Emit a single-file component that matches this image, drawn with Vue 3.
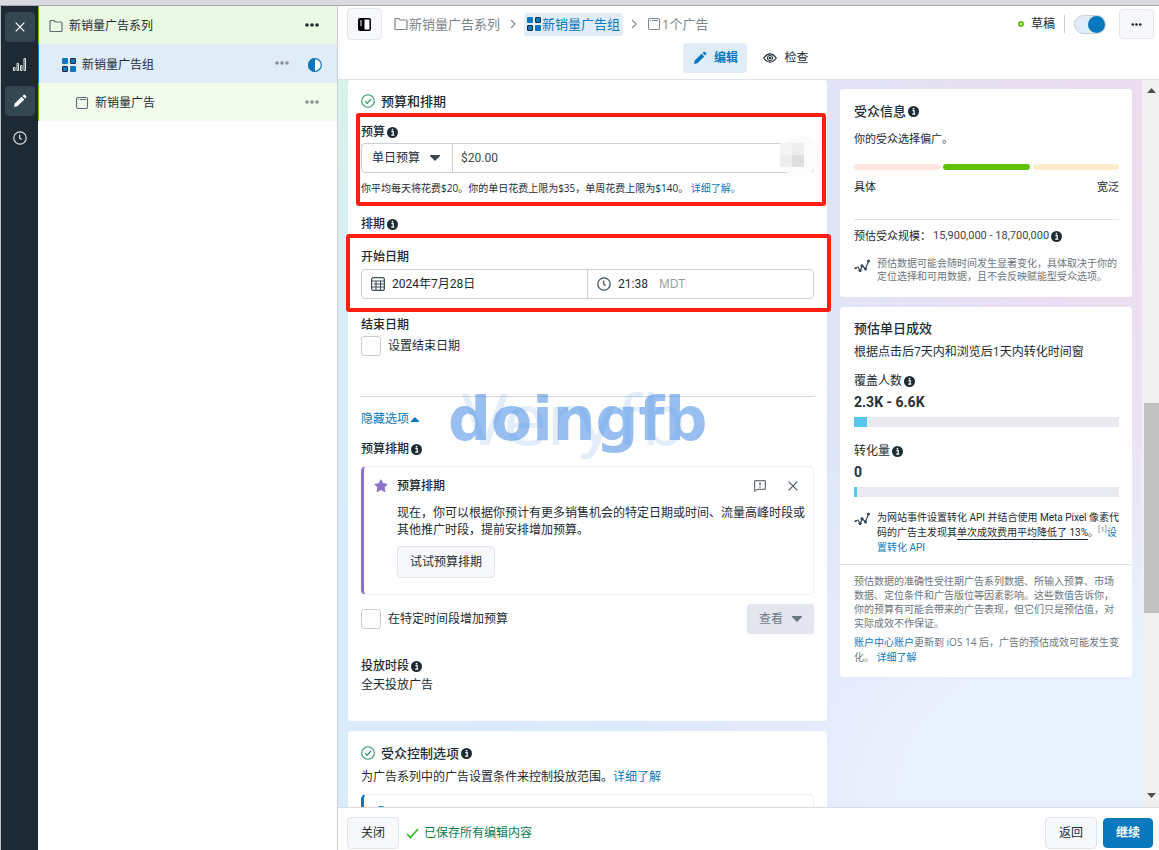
<script setup>
import { ref } from 'vue'

const budgetType = ref('daily')
const budget = ref('$20.00')
const startDate = ref('2024年7月28日')
const startTime = ref('21:38')
const hasEnd = ref(false)
const boost = ref(false)
const enabled = ref(true)
const reach = 5
const conversions = 1
</script>

<template>
  <div class="app">
    <svg class="defs" aria-hidden="true">
      <symbol id="i-info" viewBox="0 0 10 10"><circle cx="5" cy="5" r="5" fill="currentColor" /><path d="M4 4.2h1.6v3M3.8 7.4h2.8" stroke="#fff" stroke-width="1.1" fill="none" /><circle cx="5" cy="2.4" r=".8" fill="#fff" /></symbol>
      <symbol id="i-folder" viewBox="0 0 14 14"><path d="M1 11.5v-9q0-1 1-1h2.6q.6 0 .9.6l.5.9h6q1 0 1 1v7.500q0 1-1 1H2q-1 0-1-1z" fill="none" stroke="currentColor" stroke-width="1.2" /></symbol>
      <symbol id="i-grid" viewBox="0 0 14 14"><rect width="6" height="6" rx="1" fill="#0a78be" /><rect x="8.500" y=".5" width="5" height="5" rx=".5" fill="#0a78be" stroke="#1c2b33" /><rect x=".5" y="8.500" width="5" height="5" rx=".5" fill="#0a78be" stroke="#1c2b33" /><rect x="8" y="8" width="6" height="6" rx="1" fill="#0a78be" /></symbol>
      <symbol id="i-ad" viewBox="0 0 14 14"><rect x="1.500" y="1.500" width="11" height="11" rx="1.500" fill="none" stroke="currentColor" stroke-width="1.1" /><path d="M3 3.500h1M5 3.500h6" stroke="currentColor" stroke-width="1" /></symbol>
      <symbol id="i-dots" viewBox="0 0 14 4"><circle cx="2" cy="2" r="1.800" fill="currentColor" /><circle cx="7" cy="2" r="1.800" fill="currentColor" /><circle cx="12" cy="2" r="1.800" fill="currentColor" /></symbol>
      <symbol id="i-pencil" viewBox="0 0 14 14"><path d="M1 13l.7-3.400L8.600 2.700l2.700 2.700-6.900 6.900zM9.500 1.900l1-1q.7-.6 1.400 0l1.200 1.200q.6.7 0 1.400l-1 1z" fill="currentColor" /></symbol>
      <symbol id="i-clock" viewBox="0 0 14 14"><circle cx="7" cy="7" r="6.200" fill="none" stroke="currentColor" stroke-width="1.200" /><path d="M6.700 3.600v3.700l2 1.300" fill="none" stroke="currentColor" stroke-width="1.200" /></symbol>
      <symbol id="i-x" viewBox="0 0 10 10"><path d="M.7.7l8.600 8.600M9.300.7L.7 9.300" stroke="currentColor" stroke-width="1.200" /></symbol>
      <symbol id="i-check" viewBox="0 0 14 14"><circle cx="7" cy="7" r="6.300" fill="none" stroke="#2c9a6c" stroke-width="1.100" /><path d="M4 7.300l2.100 2L10 5" fill="none" stroke="#2c9a6c" stroke-width="1.200" /></symbol>
      <symbol id="i-trend" viewBox="0 0 16 14"><path d="M1 9.500l3-1.500 2.500 4L8 6.500l3.500 3.500L14.500 2" fill="none" stroke="currentColor" stroke-width="1.200" /><circle cx="1.500" cy="9.300" r="1" fill="currentColor" /><circle cx="6" cy="11.500" r="1.500" fill="currentColor" /><circle cx="8" cy="6.800" r="1.600" fill="currentColor" /><circle cx="11.500" cy="10" r="1.500" fill="currentColor" /><circle cx="14.500" cy="2" r="1.500" fill="currentColor" /></symbol>
      <symbol id="i-caret" viewBox="0 0 10 6"><path d="M0 0h10v1L5 6 0 1z" fill="currentColor" /></symbol>
    </svg>

    <div class="strip"></div>
    <div class="body">
      <nav class="rail" aria-label="工具">
        <button class="on" aria-label="关闭编辑器"><svg width="10" height="10"><use href="#i-x" /></svg></button>
        <button aria-label="图表"><svg width="13" height="13" viewBox="0 0 13 13" fill="none" stroke="currentColor"><path d="M.5 9.500h1.500v3H.5zM4 5.500h1.500v7H4zM7.500 7.500H9v5H7.500zM11 .5h1.500v12H11z" /></svg></button>
        <button class="on" aria-label="编辑模式"><svg width="14" height="14"><use href="#i-pencil" /></svg></button>
        <button aria-label="历史记录"><svg width="14" height="14"><use href="#i-clock" /></svg></button>
      </nav>

      <aside class="tree">
        <div class="node n1"><svg width="14" height="14"><use href="#i-folder" /></svg><span>新销量广告系列</span><button aria-label="更多"><svg width="14" height="4"><use href="#i-dots" /></svg></button></div>
        <div class="node n2"><svg width="14" height="14"><use href="#i-grid" /></svg><span>新销量广告组</span><button aria-label="更多"><svg width="14" height="4"><use href="#i-dots" /></svg></button><svg class="half" width="14" height="14" viewBox="0 0 14 14"><circle cx="7" cy="7" r="6.300" fill="#fff" stroke="#0a78be" stroke-width="1.200" /><path d="M7 0a7 7 0 0 0 0 14z" fill="#0a78be" /></svg></div>
        <div class="node n3"><svg width="14" height="14"><use href="#i-ad" /></svg><span>新销量广告</span><button aria-label="更多"><svg width="14" height="4"><use href="#i-dots" /></svg></button></div>
      </aside>

      <div class="main">
        <header>
          <div class="bar">
            <button class="sq" aria-label="切换侧栏"><svg width="13" height="13" viewBox="0 0 13 13"><rect x=".8" y=".8" width="11.400" height="11.400" rx="1" fill="#fff" stroke="#000" stroke-width="1.500" /><path d="M1 1h5.500v11H1z" /><path d="M2 3h2M2 5h2M2 7h2" stroke="#fff" /></svg></button>
            <nav class="crumbs" aria-label="路径">
              <a href="#"><svg width="14" height="14"><use href="#i-folder" /></svg>新销量广告系列</a>
              <svg width="6" height="10" viewBox="0 0 6 10"><path d="M1 1l4 4-4 4" fill="none" stroke="#8a8f95" stroke-width="1.300" /></svg>
              <a href="#" class="cur"><svg width="14" height="14"><use href="#i-grid" /></svg>新销量广告组</a>
              <svg width="6" height="10" viewBox="0 0 6 10"><path d="M1 1l4 4-4 4" fill="none" stroke="#8a8f95" stroke-width="1.300" /></svg>
              <a href="#"><svg width="14" height="14"><use href="#i-ad" /></svg>1个广告</a>
            </nav>
            <div class="state">
              <i class="ring"></i><span>草稿</span>
              <label class="switch"><input v-model="enabled" type="checkbox" aria-label="启用" /></label>
              <button class="sq more" aria-label="更多选项"><svg width="11" height="3"><use href="#i-dots" /></svg></button>
            </div>
          </div>
          <div class="tabs">
            <button class="tab active"><svg width="14" height="14"><use href="#i-pencil" /></svg>编辑</button>
            <button class="tab"><svg width="14" height="10" viewBox="0 0 14 10"><path d="M.7 5Q7-3.200 13.300 5 7 13.200.7 5z" fill="none" stroke="currentColor" stroke-width="1.200" /><circle cx="7" cy="5" r="2.600" fill="none" stroke="currentColor" /><circle cx="7" cy="5" r="1.300" fill="currentColor" /></svg>检查</button>
          </div>
        </header>

        <div class="scroll">
          <div class="columns">
            <div class="left">
              <section class="card form">
                <h2><svg width="14" height="14"><use href="#i-check" /></svg>预算和排期</h2>

                <div class="budget marked">
                  <label class="lbl" for="amount">预算<svg class="info"><use href="#i-info" /></svg></label>
                  <div class="field">
                    <div class="pick">
                      <select v-model="budgetType" aria-label="预算类型"><option value="daily">单日预算</option></select>
                      <svg width="10" height="6"><use href="#i-caret" /></svg>
                    </div>
                    <input id="amount" v-model="budget" type="text" class="amount" />
                  </div>
                  <div class="blob"><i></i><i></i><i></i><i></i></div>
                  <p class="hint">你平均每天将花费$20。你的单日花费上限为$35，单周花费上限为$140。 <a href="#">详细了解。</a></p>
                </div>

                <h3 class="lbl sched">排期<svg class="info"><use href="#i-info" /></svg></h3>

                <div class="start marked">
                  <label class="lbl" for="date">开始日期</label>
                  <div class="field dates">
                    <div class="half-field">
                      <svg width="14" height="14" viewBox="0 0 14 14" fill="none" stroke="currentColor"><rect x=".6" y=".6" width="12.800" height="12.800" rx="2" stroke-width="1.200" /><path d="M.5 4h13M2.500 7h11M.5 10h13M5 4v9M9.500 4v9" /></svg>
                      <input id="date" v-model="startDate" type="text" />
                    </div>
                    <div class="half-field">
                      <svg width="14" height="14"><use href="#i-clock" /></svg>
                      <input v-model="startTime" type="text" class="time" aria-label="开始时间" /><span class="tz">MDT</span>
                    </div>
                  </div>
                </div>

                <h3 class="lbl end">结束日期</h3>
                <label class="check"><input v-model="hasEnd" type="checkbox" />设置结束日期</label>

                <div class="watermark" aria-hidden="true"><span class="back">Veryfb</span><span class="front">doingfb</span></div>
                <hr />
                <a href="#" class="toggle">隐藏选项<svg width="8" height="5" viewBox="0 0 8 5"><path d="M0 5V4l4-4 4 4v1z" fill="currentColor" /></svg></a>
                <h3 class="lbl plan">预算排期<svg class="info"><use href="#i-info" /></svg></h3>

                <div class="notice">
                  <div class="nhead">
                    <svg width="14" height="14" viewBox="0 0 14 14"><path d="M7 .8l1.900 3.900 4.300.6-3.100 3 .8 4.300L7 10.600l-3.900 2 .8-4.300-3.100-3 4.300-.6z" fill="#8c72cb" stroke="#8c72cb" stroke-linejoin="round" /></svg>
                    <strong>预算排期</strong>
                    <button aria-label="反馈"><svg width="12" height="12" viewBox="0 0 12 12" fill="none" stroke="currentColor"><path d="M.7.7h10.600v8.600H3L.7 11.500z" /><path d="M6 2.300v3M6 6.500v1.200" stroke-width="1.300" /></svg></button>
                    <button aria-label="关闭提示"><svg width="10" height="10"><use href="#i-x" /></svg></button>
                  </div>
                  <p>现在，你可以根据你预计有更多销售机会的特定日期或时间、流量高峰时段或其他推广时段，提前安排增加预算。</p>
                  <button class="btn">试试预算排期</button>
                </div>

                <div class="boost">
                  <label class="check"><input v-model="boost" type="checkbox" />在特定时间段增加预算</label>
                  <button class="view" disabled>查看<svg width="10" height="6"><use href="#i-caret" /></svg></button>
                </div>

                <h3 class="lbl hours">投放时段<svg class="info"><use href="#i-info" /></svg></h3>
                <p class="allday">全天投放广告</p>
              </section>

              <section class="card control">
                <h2><svg width="14" height="14"><use href="#i-check" /></svg>受众控制选项<svg class="info"><use href="#i-info" /></svg></h2>
                <p>为广告系列中的广告设置条件来控制投放范围。<a href="#">详细了解</a></p>
                <div class="notice blue"><i></i></div>
              </section>
            </div>

            <aside class="right">
              <section class="card audience">
                <h2>受众信息<svg class="info"><use href="#i-info" /></svg></h2>
                <p class="lead">你的受众选择偏广。</p>
                <div class="meter"><i class="a"></i><i class="b"></i><i class="c"></i></div>
                <div class="ends"><span>具体</span><span>宽泛</span></div>
                <p class="size">预估受众规模：<span>15,900,000 - 18,700,000</span><svg class="info"><use href="#i-info" /></svg></p>
                <div class="tip"><svg width="16" height="14"><use href="#i-trend" /></svg><p>预估数据可能会随时间发生显著变化，具体取决于你的定位选择和可用数据，且不会反映赋能型受众选项。</p></div>
              </section>

              <section class="card results">
                <div class="pad">
                  <h2>预估单日成效</h2>
                  <p class="window">根据点击后7天内和浏览后1天内转化时间窗</p>
                  <div class="stat">覆盖人数<svg class="info"><use href="#i-info" /></svg></div>
                  <div class="num">2.3K - 6.6K</div>
                  <div class="track"><i :style="{ width: reach + '%' }"></i></div>
                  <div class="stat">转化量<svg class="info"><use href="#i-info" /></svg></div>
                  <div class="num">0</div>
                  <div class="track"><i :style="{ width: conversions + '%' }"></i></div>
                  <div class="tip api"><svg width="16" height="14"><use href="#i-trend" /></svg><p>为网站事件设置转化 API 并结合使用 Meta Pixel 像素代码的广告主发现其<u>单次成效费用平均降低了 13%</u>。<sup>[1]</sup><a href="#">设置转化 API</a></p></div>
                </div>
                <div class="legal">
                  <p>预估数据的准确性受往期广告系列数据、所输入预算、市场数据、定位条件和广告版位等因素影响。这些数值告诉你，你的预算有可能会带来的广告表现，但它们只是预估值，对实际成效不作保证。</p>
                  <p class="ios"><a href="#">账户中心账户</a>更新到 iOS 14 后，广告的预估成效可能发生变化。 <a href="#">详细了解</a></p>
                </div>
              </section>
            </aside>
          </div>

          <div class="scrollbar" aria-hidden="true">
            <svg width="9" height="5" viewBox="0 0 9 5"><path d="M0 5l4.500-5L9 5z" fill="#505050" /></svg>
            <div class="lane"><i></i></div>
            <svg width="9" height="5" viewBox="0 0 9 5"><path d="M0 0l4.500 5L9 0z" fill="#505050" /></svg>
          </div>
        </div>

        <footer>
          <button class="btn">关闭</button>
          <span class="saved"><svg width="13" height="11" viewBox="0 0 13 11"><path d="M1 6l3.500 3.500L12 1" fill="none" stroke="#2fb52f" stroke-width="1.600" /></svg>已保存所有编辑内容</span>
          <button class="btn back-btn">返回</button>
          <button class="btn primary">继续</button>
        </footer>
      </div>
    </div>
  </div>
</template>

<style>
body { margin: 0; overflow: hidden; }
</style>

<style scoped>
* { box-sizing: border-box; }
.app { height: 100vh; display: flex; flex-direction: column; color: #1c2b33; background: #fff; font: 12px/16px "Open Sans", "Noto Sans CJK SC", sans-serif; }
.defs { position: absolute; width: 0; height: 0; }
h2, h3, p { margin: 0; }
svg { flex: none; display: block; }
a { color: #0a78be; text-decoration: none; }
button, input, select { font: inherit; color: inherit; margin: 0; }
button { display: flex; align-items: center; justify-content: center; padding: 0; border: 0; background: none; }
.info { width: 11px; height: 11px; margin-left: 2px; color: #1c2b33; }
.strip { height: 6px; flex: none; background: #d9dae0; border-bottom: 1px solid #aaabb2; }
.body { flex: 1; min-height: 0; display: flex; }

.rail { width: 38px; flex: none; display: flex; flex-direction: column; align-items: center; gap: 7px; padding: 6px 2px 0; background: #1d2a33; border-left: 1px solid #b9c4c8; color: #dfe4e7; }
.rail button { width: 30px; height: 30px; border-radius: 4px; color: #dfe4e7; }
.rail .on { background: #344650; color: #fff; }
.tree { width: 300px; flex: none; border-right: 1px solid #cbcdd2; }
.node { height: 38px; display: flex; align-items: center; gap: 6px; padding: 2px 18px 0 10px; border-left: 1px solid #62bf0a; background: #f3fbec; color: #1c2b33; }
.node > svg:first-child { color: #5d6c74; }
.node button { margin-left: auto; color: #84909a; height: 20px; padding-bottom: 3px; }
.n1 { background: #ebf9e4; }
.n1 button { color: #1c2b33; }
.n2 { height: 39px; padding-left: 23px; padding-right: 15px; background: #e0edf7; border-left-color: #0a78be; }
.n2 .half { margin-left: 13px; }
.n3 { padding-left: 36px; }

.main { flex: 1; min-width: 0; display: flex; flex-direction: column; }
header { height: 74px; flex: none; border-bottom: 1px solid #dfe1e6; }
.bar { display: flex; align-items: center; height: 36px; padding: 0 5px 0 9px; }
.sq { width: 35px; height: 32px; border: 1px solid #e4e6eb; border-radius: 4px; background: #f7f8fb; }
.crumbs { display: flex; align-items: center; gap: 8px; margin-left: 10px; font-size: 13px; }
.crumbs a { display: flex; align-items: center; gap: 1px; height: 23px; padding: 0 2px; color: #7c858b; border-radius: 3px; }
.crumbs .cur { background: #e0edf7; color: #0a78be; padding: 0 3px; }
.state { margin-left: auto; display: flex; align-items: center; }
.ring { width: 6px; height: 6px; border: 2px solid #62bf0a; border-radius: 50%; margin-right: 7px; }
.switch { margin-left: 9px; padding-left: 9px; border-left: 1px solid #c9ccd2; height: 18px; display: flex; align-items: center; }
.switch input { appearance: none; width: 32px; height: 19px; border: 1px solid #c5d0da; border-radius: 10px; background: #e0edf7; display: flex; align-items: center; }
.switch input::before { content: ""; width: 17px; height: 17px; border-radius: 50%; background: #0a78be; }
.switch input:checked { justify-content: flex-end; }
.more { margin-left: 13px; height: 30px; }
.tabs { display: flex; justify-content: center; gap: 16px; padding-right: 5px; }
.tab { height: 30px; gap: 7px; margin-top: 1px; }
.tab.active { width: 64px; border-radius: 4px; background: #e0edf7; color: #0a78be; font-weight: 600; }

.scroll { flex: 1; min-height: 0; display: flex; background: radial-gradient(circle at 0 0, #d9f1ea 0, transparent 30%), radial-gradient(circle at 95% 10%, #ecdcee 0, transparent 45%), radial-gradient(circle at 85% 100%, #e9f1fe 0, #e9f1fe 12%, transparent 40%), linear-gradient(110deg, #d8edfa 0, #dce8fb 55%, #e6e0f8 74%, #eef0fd 100%); }
.columns { flex: 1; min-width: 0; overflow: hidden; display: flex; gap: 13px; padding: 0 10px; }
.left { flex: 1; min-width: 0; }
.right { width: 292px; flex: none; padding-top: 9px; }
.card { background: #fff; border-radius: 3px; margin-bottom: 10px; }
.card h2 { display: flex; align-items: center; font-size: 13px; line-height: 16px; font-weight: 500; }
.left h2 > svg:first-child { margin-right: 6px; }
.form { position: relative; padding: 13px 13px 28px; }
.lbl { display: flex; align-items: center; font-size: 12px; line-height: 16px; font-weight: 500; }
.marked { position: relative; }
.marked::after { content: ""; position: absolute; border: 4px solid #ff1e12; border-radius: 3px; pointer-events: none; }
.budget { margin-top: 15px; }
.budget::after { inset: -11px -12px -10px -5px; }
.start { margin-top: 17px; }
.start::after { inset: -15px -17px -13px -15px; }
.field { display: flex; height: 30px; margin-top: 3px; border: 1px solid #cbcfd6; border-radius: 4px; }
.pick { position: relative; width: 91px; display: flex; align-items: center; border-right: 1px solid #cbcfd6; }
.pick select { appearance: none; width: 100%; height: 100%; border: 0; background: none; padding: 0 0 0 10px; }
.pick svg { position: absolute; right: 12px; color: #3c454b; pointer-events: none; }
.field input { border: 0; background: none; padding: 0; min-width: 0; outline: 0; }
.field .amount { flex: 1; padding-left: 8px; font-family: Roboto, sans-serif; color: #444; }
.blob { position: absolute; right: -4px; top: 11px; width: 38px; height: 42px; border-radius: 50%; background: #fbfbfb; }
.blob { display: grid; grid-template-columns: 12px 12px; grid-template-rows: 12px 12px; padding-top: 8px; }
.blob i { background: #ededed; }
.blob i:nth-child(1) { background: #f4f4f4; }
.blob i:nth-child(4) { background: #dfdfdf; }
.hint { margin-top: 7px; font-size: 10px; line-height: 16px; white-space: nowrap; }
.sched { margin-top: 20px; }
.dates { margin-top: 4px; }
.half-field { flex: 1; display: flex; align-items: center; gap: 7px; padding-left: 9px; color: #3f4d55; }
.half-field + .half-field { border-left: 1px solid #cbcfd6; }
.half-field input { width: 110px; color: #1c2b33; font-family: Roboto, "Noto Sans CJK SC", sans-serif; }
.half-field .time { width: 34px; }
.tz { color: #92999f; }
.end { margin-top: 18px; }
.check { display: flex; align-items: center; gap: 7px; width: fit-content; }
.end + .check { margin-top: 3px; }
.check input { appearance: none; width: 20px; height: 20px; border: 1px solid #c8cdd8; border-radius: 3px; background: #fff; }
hr { height: 1px; border: 0; margin: 40px 0 14px; background: #d4d6d9; }
.toggle { display: flex; align-items: center; gap: 2px; width: fit-content; }
.plan { margin-top: 14px; }
.watermark { position: absolute; left: 100px; top: 303px; width: 266px; height: 80px; pointer-events: none; font-family: "DejaVu Sans", sans-serif; white-space: nowrap; }
.watermark span { position: absolute; }
.back { left: 13px; top: 0; font-size: 70px; line-height: 76px; color: rgba(120, 170, 235, .2); }
.front { left: 0; top: 0; font-size: 60px; line-height: 72px; font-weight: 700; color: rgba(74, 140, 228, .56); }
.notice { height: 129px; margin-top: 9px; padding: 11px 7px 0 10px; border: 1px solid #eff0f2; border-left: 3px solid #8c72cb; border-radius: 5px; }
.nhead { display: flex; align-items: center; height: 16px; color: #1c2b33; }
.nhead strong { font-weight: 500; margin: 0 auto 0 9px; }
.nhead button { color: #4b565d; margin-right: 8px; }
.nhead button:first-of-type { margin-right: 22px; }
.notice p { margin: 10px 0 0 23px; line-height: 17px; }
.btn { height: 32px; padding: 0 12px; border: 1px solid #e2e5ec; border-radius: 4px; background: #f7f8fb; color: #1c2b33; }
.notice .btn { margin: 8px 0 0 23px; }
.boost { display: flex; justify-content: space-between; align-items: center; margin-top: 9px; }
.view { width: 67px; height: 30px; gap: 9px; border-radius: 3px; background: #e4e6ef; color: #6d7880; }
.hours { margin-top: 24px; }
.allday { margin-top: 3px; }
.control { padding: 14px 13px 0; }
.control p { margin-top: 8px; }
.control .notice { margin-top: 9px; border-left-color: #0a78be; }
.notice.blue i { display: block; width: 14px; height: 14px; border-radius: 50%; background: #0a78be; }

.audience { padding: 14px 13px 14px 14px; font-size: 11px; }
.lead { margin-top: 12px; }
.meter { display: flex; gap: 3px; margin-top: 17px; }
.meter i { flex: 1; height: 6px; border-radius: 3px; background: #ffe5e0; }
.meter .b { background: #62bf0a; }
.meter .c { background: #ffedc9; }
.ends { display: flex; justify-content: space-between; padding: 9px 0 24px; border-bottom: 1px solid #e3e5e8; }
.size { display: flex; align-items: center; margin-top: 8px; }
.size span { margin-left: 2px; font-family: Roboto, sans-serif; color: #3d454b; }
.tip { display: flex; gap: 7px; margin-top: 13px; font-size: 10px; line-height: 13px; color: #34495a; }
.tip p { flex: 1; min-width: 0; margin-right: -1px; color: #6c767d; }
.tip svg { margin-top: 2px; }
.pad { padding: 13px 13px 9px 14px; border-bottom: 1px solid #e3e5e8; }
.window { margin-top: 8px; }
.stat { display: flex; align-items: center; margin-top: 13px; }
.num { margin-top: 5px; font: 700 14px/16px Roboto, sans-serif; color: #2b3033; }
.track { height: 10px; margin-top: 7px; background: #e9ebf0; }
.track + .stat { margin-top: 16px; }
.track i { display: block; height: 100%; background: #55c6ee; }
.api { line-height: 15px; font-family: Roboto, "Noto Sans CJK SC", sans-serif; }
.api p { color: #1c2b33; }
.api u { text-underline-offset: 3px; }
.api sup { font-size: 8px; line-height: 1; color: #7c858b; }
.legal { padding: 9px 13px 12px 14px; font-size: 10px; line-height: 14px; color: #6c767d; }
.ios { margin: 5px -1px 0 0; line-height: 15px; }

.scrollbar { width: 17px; flex: none; background: #f0f0f0; display: flex; flex-direction: column; align-items: center; padding: 8px 0 9px 2px; }
.lane { flex: 1; width: 100%; }
.lane i { display: block; height: 30%; margin-top: 310px; background: #c1c1c1; }

footer { height: 43px; flex: none; display: flex; align-items: center; padding: 8px 6px 0 9px; border-top: 1px solid #d8dbdf; }
footer .btn { width: 52px; }
.saved { display: flex; align-items: center; gap: 5px; margin-left: 7px; color: #0a7d4f; }
.back-btn { margin-left: auto; }
footer .primary { width: 50px; height: 30px; margin-left: 6px; background: #0a78be; border-color: #0a78be; color: #fff; font-weight: 600; }
</style>
